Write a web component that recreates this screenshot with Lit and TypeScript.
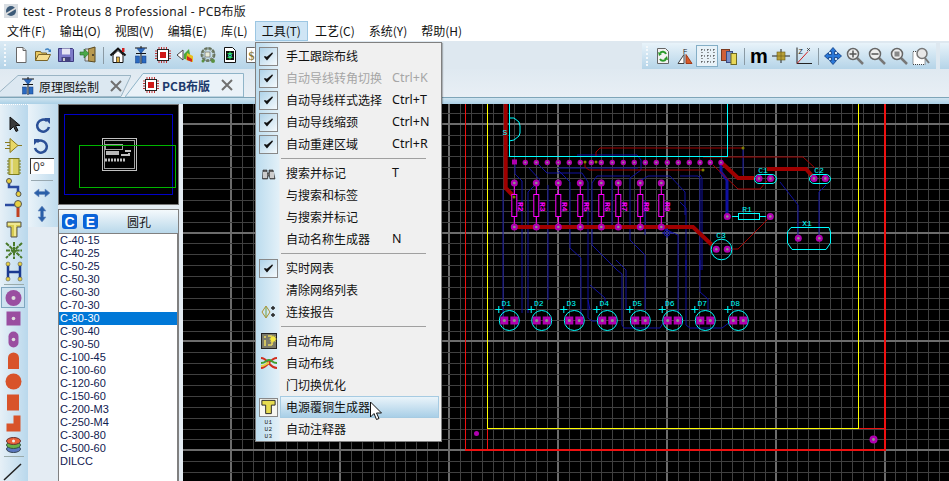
import { LitElement, html, css, svg } from "lit";
import { customElement } from "lit/decorators.js";

const icon = (body: unknown, w = 18, h = 18) =>
  html`<svg width=${w} height=${h} viewBox="0 0 ${w} ${h}">${body}</svg>`;

// main toolbar glyphs
const TOOL_ICONS: Record<string, unknown> = {
  newDoc: svg`<path d="M4.500 1.500h6.500l3 3v12h-9.500z" fill="#fff" stroke="#666"/><path d="M11 1.500v3h3" fill="#ddd" stroke="#666"/>`,
  open: svg`<path d="M1.500 14.500v-9h5l1 1.500h5v2" fill="#e8c860" stroke="#7a6428"/><path d="M1.500 14.500l3-6h12l-3 6z" fill="#f6df90" stroke="#7a6428"/><path d="M11 3c2-1.500 4-1 5 1l1-1v3h-3l1-1c-1-1.500-2.500-1.500-3.500-.5" fill="#3a7fc0"/>`,
  save: svg`<path d="M1.500 2.500h14l1 1v12h-15z" fill="#7d7bc9" stroke="#3d3b80"/><rect x="5" y="2.500" width="8" height="6" fill="#e6e6f4"/><rect x="4.500" y="11" width="9" height="4.500" fill="#45447f"/><rect x="6" y="12" width="2" height="3" fill="#ccc"/>`,
  exit: svg`<path d="M9 3l7-2v15l-7-1z" fill="#b89a50" stroke="#5a4a20"/><path d="M9 3h-3v12h3" fill="#ddd" stroke="#666"/><path d="M1 6h4v-3l5 4.500-5 4.500v-3h-4z" fill="#4aa84a" stroke="#2a6a2a" stroke-width=".6"/><circle cx="14" cy="9" r=".9" fill="#222"/>`,
  home: svg`<path d="M1.500 9.500l7.500-7 7.500 7" fill="none" stroke="#111" stroke-width="2"/><path d="M4 9v7.500h10v-7.500l-5-4.500z" fill="#fff" stroke="#111"/><rect x="7.500" y="11" width="3" height="5.500" fill="#e0b040" stroke="#111" stroke-width=".6"/><rect x="13" y="2" width="2.500" height="4" fill="#d02020"/>`,
  diode: svg`<path d="M9 0v18" stroke="#111"/><path d="M3 2h12M4 7.500h10" stroke="#111"/><path d="M5 2.500l8 0-4 5z" fill="#2a6ac0" stroke="#123a80" stroke-width=".5"/><rect x="3.500" y="10" width="4" height="7" fill="#2a6ac0" stroke="#123a80" stroke-width=".5"/><rect x="10" y="10" width="4" height="7" fill="#2a6ac0" stroke="#123a80" stroke-width=".5"/>`,
  chip: svg`<rect x="3.500" y="3.500" width="11" height="11" fill="#fff" stroke="#222"/><rect x="6" y="6" width="6" height="6" fill="#d01818"/><path d="M5 1v2M7.500 1v2M10 1v2M12.500 1v2M5 15v2M7.500 15v2M10 15v2M12.500 15v2M1 5h2M1 7.500h2M1 10h2M1 12.500h2M15 5h2M15 7.500h2M15 10h2M15 12.500h2" stroke="#c03030"/>`,
  view3d: svg`<path d="M1 9l6-5v10z" fill="#fff" stroke="#444"/><path d="M8 8l5-5 2 11-7-1z" fill="#4ca83c"/><path d="M11 7l6 3 0 6-7-2z" fill="#e8c020"/><path d="M11 10l5 3v3l-5-2z" fill="#d02a20"/>`,
  gear: svg`<circle cx="9" cy="8.500" r="6" fill="none" stroke="#7a8a70" stroke-width="3" stroke-dasharray="3 1"/><circle cx="9" cy="8.500" r="6.500" fill="none" stroke="#444" stroke-width=".5"/><rect x="6" y="6" width="5" height="5" fill="#e8ecd8" stroke="#555" stroke-width=".6"/><circle cx="14" cy="15" r="2" fill="#5a9040"/><circle cx="4" cy="15" r="1.500" fill="#5a9040"/>`,
  bom: svg`<path d="M3.500 1.500h8l3 3v12h-11z" fill="#fff" stroke="#111"/><rect x="5" y="5" width="8" height="9" fill="#111"/><path d="M9 5.500v8M6.500 7.500h5M6.500 11.500h5" stroke="#20e040"/><circle cx="9" cy="9.500" r="1.500" fill="none" stroke="#40e0e0"/>`,
  dollar: svg`<path d="M3.500 1.500h8l3 3v12h-11z" fill="#fff" stroke="#666"/><text x="5.500" y="13.500" font-family="Liberation Serif" font-size="12" font-weight="700" fill="#8a7a3a">$</text>`,
  refresh: svg`<path d="M3.500 1.500h8l3 3v12h-11z" fill="#f2f2f2" stroke="#666"/><path d="M12 7a3.500 3.500 0 0 0-6-1" fill="none" stroke="#2a9a2a" stroke-width="2"/><path d="M6 12a3.500 3.500 0 0 0 6 0" fill="none" stroke="#2a9a2a" stroke-width="2"/><path d="M4 5l4 2-3 2zM14 13l-4-1 3-3z" fill="#2a9a2a"/>`,
  flip: svg`<path d="M8 16.500v-9l-6 9z" fill="#fff" stroke="#444"/><path d="M10 16.500v-9l6 9z" fill="#d85a28" stroke="#a03a18"/><text x="7" y="6.500" font-family="Liberation Sans" font-size="7" fill="#222">F</text>`,
  dots: svg`<path d="M3 3h14M3 9h14M3 15h14" stroke="#333" stroke-dasharray="1 2"/><path d="M4 2v14M10 2v14M16 2v14" stroke="#333" stroke-dasharray="1 2"/>`,
  layers: svg`<rect x="1.500" y="2.500" width="8" height="11" fill="#d06038" stroke="#7a3a20"/><rect x="6.500" y="4.500" width="6" height="11" fill="#7a90c8" stroke="#3a4a80"/><rect x="11" y="6.500" width="5.500" height="11" fill="#e8d858" stroke="#706a20"/>`,
  origin: svg`<path d="M0 9h18M9 2v14" stroke="#222"/><rect x="5" y="5" width="8" height="8" fill="#b8a038" stroke="#6a5a18" stroke-width=".6"/><path d="M9 5v8M5 9h8" stroke="#6a5a18" stroke-width=".6"/>`,
  axes: svg`<path d="M3 .5v16h15" fill="none" stroke="#222"/><path d="M3 16.500l11-12" stroke="#d02020"/><text x="4.500" y="7" font-family="Liberation Sans" font-size="7" fill="#222">Z</text><path d="M13 1l3 3M16 1l-3 3" stroke="#222" stroke-width=".7"/>`,
  pan: svg`<path d="M9 .5l3.500 4h-2v3h3v-2l4 3.500-4 3.500v-2h-3v3h2l-3.500 4-3.500-4h2v-3h-3v2l-4-3.500 4-3.500v2h3v-3h-2z" fill="#2a78d8" stroke="#0c3a80" stroke-width=".8"/>`,
  zoomIn: svg`<path d="M11 11l6 6" stroke="#777" stroke-width="2.500"/><circle cx="7" cy="7" r="5.500" fill="#eee" stroke="#666" stroke-width="1.500"/><path d="M3.500 7h7M7 3.500v7" stroke="#555" stroke-width="1.500"/>`,
  zoomOut: svg`<path d="M11 11l6 6" stroke="#777" stroke-width="2.500"/><circle cx="7" cy="7" r="5.500" fill="#eee" stroke="#666" stroke-width="1.500"/><path d="M3.500 7h7" stroke="#555" stroke-width="1.500"/>`,
  zoomFit: svg`<path d="M11 11l6 6" stroke="#777" stroke-width="2.500"/><circle cx="7" cy="7" r="5.500" fill="#eee" stroke="#666" stroke-width="1.500"/><rect x="4.500" y="4.500" width="5" height="5" fill="#888"/>`,
  zoomArea: svg`<rect x="1" y="4.500" width="12" height="13" fill="#fff" stroke="#444" stroke-dasharray="1 1"/><path d="M13 11l4 5" stroke="#777" stroke-width="2"/><circle cx="10" cy="6.500" r="5" fill="#e8e8e8" stroke="#777" stroke-width="1.500"/>`,
};

const pad = (fill: string, shape: unknown) => icon(svg`<g fill=${fill}>${shape}</g>`, 22, 21);
const PURPLE = "#9a4ea0";
const RUST = "#d8532a";

// left mode column, top block then the pad block
const MODE_TOP = [
  icon(svg`<path d="M7 3v13l3.500-3.500 2.500 5 2-1-2.500-5h4.500z" fill="#3a3a3a" stroke="#111"/>`, 22, 21),
  icon(svg`<path d="M4 10.500h3M15 10.500h4" stroke="#8a7a20"/><path d="M7 3.500v14l8-7z" fill="#e8d868" stroke="#8a7a20"/><path d="M2 7.500h5M2 13.500h5" stroke="#8a7a20"/>`, 22, 21),
  icon(svg`<rect x="6" y="2.500" width="10" height="16" fill="#d8d060" stroke="#7a7a20"/><path d="M4 5h2M4 8h2M4 11h2M4 14h2M4 17h2M16 5h2M16 8h2M16 11h2M16 14h2M16 17h2" stroke="#7a7a20"/><path d="M9 3v15" stroke="#eee"/>`, 22, 21),
  icon(svg`<path d="M6 4v6h9v7" fill="none" stroke="#2a4aa0" stroke-width="2.500"/><circle cx="6" cy="4" r="2.500" fill="#e8d040" stroke="#555"/><circle cx="15.500" cy="17" r="2.500" fill="#e8d040" stroke="#555"/>`, 22, 21),
  icon(svg`<path d="M2 7h10" stroke="#2a4aa0" stroke-width="2.500"/><path d="M15 8v11" stroke="#c04020" stroke-width="3"/><circle cx="15" cy="6" r="3.500" fill="#e8d040" stroke="#555"/>`, 22, 21),
  icon(svg`<path d="M4 3h14v5h-4v10h-6v-10h-4z" fill="#d8cc50" stroke="#555"/><path d="M5 4h12v2h-4v11h-2v-11h-6z" fill="#f0e890"/>`, 22, 21),
  icon(svg`<path d="M3 3l16 15M19 3l-16 15M11 2v17M3 10.500h16" stroke="#4a7a2a" stroke-width="2" stroke-dasharray="4 .8"/>`, 22, 21),
  icon(svg`<path d="M5 4v13M17 4v13M5 11h12" stroke="#1a3a90" stroke-width="2.500"/><circle cx="5" cy="3" r="2" fill="#e8d040" stroke="#555" stroke-width=".6"/><circle cx="17" cy="3" r="2" fill="#e8d040" stroke="#555" stroke-width=".6"/><circle cx="5" cy="18" r="2" fill="#e8d040" stroke="#555" stroke-width=".6"/><circle cx="17" cy="18" r="2" fill="#e8d040" stroke="#555" stroke-width=".6"/>`, 22, 21),
];
const MODE_PADS = [
  pad(PURPLE, svg`<circle cx="12.500" cy="11" r="8"/><circle cx="12.500" cy="11" r="2" fill="#ddd"/>`),
  pad(PURPLE, svg`<rect x="5.500" y="3.500" width="14" height="14"/><circle cx="12.500" cy="10.500" r="1.800" fill="#ddd"/>`),
  pad(PURPLE, svg`<rect x="7.500" y="2.500" width="10" height="16" rx="5"/><circle cx="12.500" cy="10.500" r="1.800" fill="#ddd"/>`),
  pad(RUST, svg`<path d="M7 19v-11a5.500 5.500 0 0 1 11 0v11z"/>`),
  pad(RUST, svg`<circle cx="12.500" cy="10.500" r="8"/>`),
  pad(RUST, svg`<rect x="6" y="2.500" width="12" height="16"/>`),
  pad(RUST, svg`<path d="M5.500 18.500v-8h7v-8h7v16z"/>`),
  icon(svg`<ellipse cx="12.500" cy="15" rx="7" ry="3.500" fill="#5a78c0" stroke="#345"/><ellipse cx="12.500" cy="11" rx="7" ry="3.500" fill="#68b048" stroke="#354"/><ellipse cx="12.500" cy="7" rx="7" ry="3.500" fill="#e86038" stroke="#633"/><circle cx="12.500" cy="7" r="1.500" fill="#eee"/>`, 22, 21),
];

const LIST = ["C-40-15", "C-40-25", "C-50-25", "C-50-30", "C-60-30", "C-70-30", "C-80-30", "C-90-40", "C-90-50", "C-100-45", "C-100-60", "C-120-60", "C-150-60", "C-200-M3", "C-250-M4", "C-300-80", "C-500-60", "DILCC"];
const MENUS = ["文件(F)", "输出(O)", "视图(V)", "编辑(E)", "库(L)", "工具(T)", "工艺(C)", "系统(Y)", "帮助(H)"];

type MenuRow = { label?: string; key?: string; check?: boolean; off?: boolean; hot?: boolean; art?: unknown };

const CHECK = icon(svg`<path d="M4.500 8.500l2.500 3 5.500-6.500-5.500 4.500z" fill="#111" stroke="#111" stroke-width="1.200"/>`, 17, 17);

const MENU_ROWS: MenuRow[] = [
  { label: "手工跟踪布线", check: true },
  { label: "自动导线转角切换", key: "Ctrl+K", check: true, off: true },
  { label: "自动导线样式选择", key: "Ctrl+T", check: true },
  { label: "自动导线缩颈", key: "Ctrl+N", check: true },
  { label: "自动重建区域", key: "Ctrl+R", check: true },
  {},
  { label: "搜索并标记", key: "T", art: icon(svg`<path d="M3 6h4v3h2v-3h4l2 9h-5l-.5-3h-1.500l-.5 3h-5z" fill="#666" stroke="#222" stroke-width=".6"/><rect x="3" y="8" width="4" height="6" fill="#ccc"/><rect x="10" y="8" width="4" height="6" fill="#ccc"/>`) },
  { label: "与搜索和标签" },
  { label: "与搜索并标记" },
  { label: "自动名称生成器", key: "N" },
  {},
  { label: "实时网表", check: true },
  { label: "清除网络列表" },
  { label: "连接报告", art: icon(svg`<path d="M6 3l-4 6 4 6 4-6z" fill="none" stroke="#b09030"/><path d="M6 4v10" stroke="#70a040"/><path d="M13 3v4M11 5h4M13 10v4M11 12h4" stroke="#222" stroke-width="1.400"/>`) },
  {},
  { label: "自动布局", art: icon(svg`<rect x="1.500" y="1.500" width="15" height="15" fill="#7a7a6a" stroke="#222"/><path d="M5 4v2M5 8v6M8 4h4M8 13h4M12 9v4" stroke="#e8d860" stroke-width="1.600"/><path d="M13 3l1 2 2-1-1 2 2 1-2 1 1 2-2-1-1 2-1-2-2 1 1-2-2-1 2-1-1-2 2 1z" fill="#f4e840"/>`) },
  { label: "自动布线", art: icon(svg`<path d="M1 4c7 0 8 10 16 10M1 14c7 0 8-10 16-10" fill="none" stroke="#d03020" stroke-width="2"/><path d="M1 9c5 0 5-3 8-3s3 3 8 3" fill="none" stroke="#40a030" stroke-width="2"/><path d="M1 12c5 0 5-3 8-3" fill="none" stroke="#e8d040" stroke-width="2"/>`) },
  { label: "门切换优化" },
  { label: "电源覆铜生成器", hot: true, art: icon(svg`<path d="M2 2h14v5h-4v9h-6v-9h-4z" fill="#e6dc50" stroke="#222"/>`) },
  { label: "自动注释器", art: html`<span class="annot">U1<br />U2<br />U3</span>` },
];

// canvas grid, in page pixels: majors fall every 108.9 with ten cells to one
const GRID_X = Array.from({ length: 71 }, (_, i) => 231.2 + i * 10.89);
const GRID_Y = Array.from({ length: 36 }, (_, i) => 101.9 + i * 10.89);

const TOP_PADS = [514.3, 525.3, 536.3, 547.3, 558.3, 569.3, 580.3, 591.3, 601.3, 612.3, 623.3, 634.3, 645.3, 656.3, 667.3, 678.3, 689.3, 700, 710.3, 721];
const RES_X = [514.3, 536.3, 558.3, 580.3, 601.3, 618.3, 640.3, 661.3];
const RES_LABEL = ["R2", "R3", "R4", "R5", "R6", "R7", "R8", "R9"];
const LED_X = [509.3, 541.7, 574.3, 607.3, 640.3, 672.7, 705.3, 738.3];

const BLUE_TRACKS = [
  "515,165 515,174 522,181 522,270 522,313",
  "503,190 503,320",
  "529,168 540,180 528,192 528,290 528,313",
  "537,163 547,173 582,173 588,182 588,300 590,310",
  "548,185 548,300",
  "558,170 570,182 570,248 581,258 581,320",
  "577,155 637,155 641,160 641,170 630,178 630,240 645,255 645,310",
  "558,168 638,168",
  "592,183 597,176 630,176",
  "592,183 592,245 617,270 622,274 622,325 624,328 660,328 663,323",
  "590,285 605,298 605,302",
  "588,300 588,318 592,321 597,321",
  "612,180 612,227",
  "640,181 648,176 670,176 685,192 685,215",
  "662,228 678,235 678,312",
  "686,260 686,325 690,328 722,328 730,322",
  "700,260 700,292 708,299 708,310",
  "616,260 626,270 626,310",
  "645,200 645,235",
  "743,148 743,175",
  "680,176 698,176 700,178 700,270",
  "700,175 702,178 702,270",
  "780,182 798,205 798,238",
  "819,238 819,192 826,185",
  "680,202 686,208 686,270",
];

const RED_THIN = [
  "596,156 596,152 600,148 743,148",
  "585,162 585,167 589,170 703,170",
  "703,157 803,157 815,168",
  "713,165 738,189 760,189 767,181",
  "733,249 738,249 770,217",
];
const RED_WIDE = [
  "505.700,104 505.700,188 514.300,197",
  "514,227 693,227 712,245",
  "722,163 738,178 755,178",
  "767,169 806,169 814,178",
];

@customElement("app-root")
export class AppRoot extends LitElement {
  static styles = css`
    :host {
      display: block;
      position: relative;
      width: 949px;
      height: 481px;
      overflow: hidden;
      background: #e4ecf3;
      font-family: "Noto Sans CJK SC", "Noto Sans", sans-serif;
      font-size: 12px;
      color: #111;
    }
    svg {
      display: block;
    }
    .title {
      display: flex;
      align-items: center;
      gap: 4px;
      height: 21px;
      padding-left: 3px;
      background: #fff;
      font-family: "Noto Sans", "Noto Sans CJK SC", sans-serif;
      font-size: 12px;
      letter-spacing: 0.25px;
      color: #222;
    }
    .menubar {
      display: flex;
      height: 20px;
      background: #fff;
    }
    .menubar span {
      display: flex;
      align-items: center;
      padding: 0 7px;
      line-height: 20px;
    }
    .menubar .open {
      background: #cfe5f5;
      outline: 1px solid #9cc6e2;
      outline-offset: -1px;
    }
    .toolrow {
      display: flex;
      height: 28px;
      background: #dee8f0;
    }
    .bar {
      display: flex;
      align-items: center;
      height: 26px;
      margin-top: 2px;
      background: linear-gradient(#e8f3fa, #b5d4e8);
    }
    .bar.left {
      width: 300px;
      padding-left: 4px;
      background: linear-gradient(#dcebf5, #b5d4e8);
      margin-top: 0;
      height: 28px;
    }
    .bar.right {
      margin-left: auto;
      width: 294px;
      padding-left: 4px;
      box-sizing: border-box;
    }
    .bar.stub {
      width: 9px;
      margin-left: 4px;
    }
    .grip {
      flex: none;
      align-self: stretch;
      width: 0;
      margin: 3px 4px 3px 0;
      border-left: 2px dotted #f4f8fb;
    }
    .btn {
      display: flex;
      align-items: center;
      justify-content: center;
      flex: none;
      width: 22px;
      height: 22px;
      box-sizing: border-box;
    }
    .bar.left .btn {
      width: 22.3px;
    }
    .btn.on {
      border: 1px solid #84aec6;
      background: #e8f2f8;
    }
    .btn .m {
      font: 700 20px/22px "Liberation Sans", sans-serif;
      color: #000;
    }
    .tsep {
      flex: none;
      width: 1px;
      height: 17px;
      margin: 0 3px 0 4px;
      background: #8a9aa4;
    }
    .tabs {
      display: flex;
      height: 28px;
      align-items: flex-end;
      background: linear-gradient(#dfe9f1, #e8eff5);
    }
    .tab {
      position: relative;
      display: flex;
      align-items: center;
      box-sizing: border-box;
      height: 22px;
      width: 131px;
      padding-left: 19px;
      gap: 2px;
    }
    .tab.active {
      height: 24px;
      width: 120px;
      margin-left: -6px;
      padding-left: 17px;
      font-weight: 700;
      color: #1d3a6c;
    }
    .tab > .shape {
      position: absolute;
      inset: 0;
      z-index: 0;
    }
    .tab > :not(.shape) {
      position: relative;
    }
    .tab .x {
      margin-left: 8px;
    }
    .band {
      height: 7px;
      box-sizing: border-box;
      border-top: 1px solid #7ea5b8;
      background: linear-gradient(#cfe4f0, #abd0e6);
    }
    .main {
      display: flex;
      height: 377px;
    }
    .col1 {
      display: flex;
      flex-direction: column;
      width: 28px;
      box-sizing: border-box;
      padding-top: 9px;
      border-top: 1px dotted #fff;
      background: linear-gradient(90deg, #e6f0f7, #b9d8ec);
    }
    .col1 .sep {
      flex: none;
      height: 1px;
      margin: 2px 4px 2px 4px;
      background: #9aa;
    }
    .col1 .sep.low {
      margin: 1px 4px 3px;
    }
    .mode {
      flex: none;
      height: 21px;
      margin-left: 1px;
      box-sizing: border-box;
    }
    .mode.up {
      margin-left: 3px;
    }
    .mode.on {
      background: #cfe2f0;
      outline: 1px solid #7fa6bf;
      outline-offset: -1px;
      width: 24px;
    }
    .col2 {
      width: 30px;
      height: 123px;
      box-sizing: border-box;
      padding: 10px 2px 0 0;
      display: flex;
      flex-direction: column;
      align-items: center;
      background: linear-gradient(90deg, #eaf3f9, #c0dcee);
    }
    .col2 input {
      box-sizing: border-box;
      flex: none;
      width: 24px;
      height: 16px;
      margin: 2px 0 6px;
      padding: 0 0 0 2px;
      border: none;
      border-left: 1px solid #333;
      border-top: 1px solid #333;
      background: #fff;
      font: 12px "Noto Sans", sans-serif;
      color: #444;
    }
    .col2 .sep {
      width: 22px;
      height: 1px;
      background: #98a8b0;
      margin-bottom: 1px;
    }
    .cell {
      height: 21px;
      display: flex;
      align-items: center;
    }
    .mid {
      display: flex;
      flex-direction: column;
      width: 121px;
      margin-right: 4px;
    }
    .preview {
      height: 101px;
      flex: none;
      background: #000;
      box-sizing: border-box;
      border: 1px solid #777;
    }
    .phead {
      display: flex;
      align-items: center;
      gap: 6px;
      flex: none;
      height: 24px;
      margin-top: 4px;
      padding-left: 3px;
      box-sizing: border-box;
      border: 1px solid #808080;
      border-bottom: none;
      background: linear-gradient(#f4f9fc, #b9d8ea);
    }
    .chipbtn {
      display: flex;
      align-items: center;
      justify-content: center;
      width: 15px;
      height: 15px;
      border-radius: 3px;
      background: #0a63d8;
      color: #fff;
      font: 700 14px "Liberation Sans", sans-serif;
    }
    .phead .name {
      flex: 1;
      text-align: center;
      padding-right: 4px;
    }
    .list {
      flex: 1;
      background: #fff;
      box-sizing: border-box;
      border-left: 1px solid #808080;
      border-right: 2px solid #808080;
      border-top: 1px solid #808080;
      font-family: "Liberation Sans", sans-serif;
      font-size: 11px;
    }
    .list div {
      height: 13px;
      line-height: 13px;
      padding-left: 1px;
      color: #102050;
    }
    .list div.sel {
      background: #0078d7;
      color: #fff;
    }
    .canvas {
      flex: 1;
      background: #000;
      min-width: 0;
    }
    .menu {
      position: absolute;
      left: 255px;
      top: 42px;
      width: 187px;
      height: 400px;
      box-sizing: border-box;
      padding: 2px 2px 2px 1px;
      border: 1px solid #808080;
      background: linear-gradient(90deg, #bcdcee 0, #e2f0f8 23px, #f0f0f0 24px);
      box-shadow: 1px 1px 1px rgba(0, 0, 0, 0.25);
    }
    .row {
      position: relative;
      display: flex;
      align-items: center;
      height: 22px;
      box-sizing: border-box;
    }
    .row .gut {
      display: flex;
      align-items: center;
      justify-content: center;
      width: 23px;
      flex: none;
      margin-right: 6px;
    }
    .row .label {
      width: 106px;
      flex: none;
      margin-top: -2px;
      white-space: nowrap;
    }
    .row .key {
      margin-top: -2px;
      font-family: "Noto Sans", sans-serif;
      font-size: 12.5px;
    }
    .row.off {
      color: #a6a6a6;
    }
    .hotbg {
      position: absolute;
      left: 24px;
      top: 353px;
      width: 159px;
      height: 22px;
      box-sizing: border-box;
      border: 1px solid #a6cbe2;
      background: linear-gradient(#eaf4fa, #a9cfe7);
    }
    .checkbox {
      display: flex;
      width: 19px;
      height: 19px;
      align-items: center;
      justify-content: center;
      box-sizing: border-box;
      border: 1px solid #888;
      background: linear-gradient(135deg, #aed2e8, #f4fafd);
    }
    .checkbox.white {
      background: #f7f7f0;
    }
    .msep {
      height: 7px;
      display: flex;
      align-items: center;
      padding-left: 24px;
      box-sizing: border-box;
      padding-right: 13px;
    }
    .msep::after {
      content: "";
      flex: 1;
      height: 1px;
      background: #a0a0a0;
    }
    .annot {
      font: 6px/7px "Liberation Mono", monospace;
      color: #222;
      letter-spacing: 0.5px;
    }
    .cursor {
      position: absolute;
      left: 369px;
      top: 401px;
    }
  `;

  private toolbar(names: (string | null)[], active?: string) {
    return names.map((n) => {
      if (n === null) return html`<span class="tsep"></span>`;
      if (n === "metric") return html`<span class="btn"><span class="m">m</span></span>`;
      return html`<span class="btn ${n === active ? "on" : ""}">${icon(TOOL_ICONS[n])}</span>`;
    });
  }

  private renderBoard() {
    const pin = (x: number, y: number, r: number) => svg`
      <circle cx=${x} cy=${y} r=${r} fill="#b000b0" />
      <circle cx=${x} cy=${y} r=${r * 0.36} fill="#8a9a8a" />`;
    const label = (x: number, y: number, t: string, c = "#00ffff") =>
      svg`<text x=${x} y=${y} font-family="Liberation Mono" font-size="8" fill=${c} text-anchor="middle">${t}</text>`;
    const poly = (p: string, stroke: string, w: number) =>
      svg`<polyline points=${p} fill="none" stroke=${stroke} stroke-width=${w} />`;
    return html`<svg class="canvas" width="766" height="377" viewBox="183 104 766 377">
      <g shape-rendering="crispEdges">
        ${GRID_X.map((x, i) => {
          const major = i % 10 === 0;
          return svg`<line x1=${Math.round(x)} x2=${Math.round(x)} y1="104" y2="481" stroke=${major ? "#6c6c6c" : "#404040"} stroke-width=${major ? 2 : 1} />`;
        })}
        ${GRID_Y.map((y, i) => {
          const major = (i - 2) % 10 === 0;
          return svg`<line y1=${Math.round(y)} y2=${Math.round(y)} x1="183" x2="949" stroke=${major ? "#6c6c6c" : "#404040"} stroke-width=${major ? 2 : 1} />`;
        })}
      </g>
      ${BLUE_TRACKS.map((p) => poly(p, "#1010a0", 1))}
      ${poly("721,163 721,172 727,180 727,216", "#1010a0", 3)}
      ${RED_THIN.map((p) => poly(p, "#a00000", 1))}
      ${RED_WIDE.map((p) => poly(p, "#a00000", 4))}

      <g shape-rendering="crispEdges">
        <line x1="465.500" x2="465.500" y1="104" y2="450" stroke="#ee1111" />
        <polyline points="465,450 884.500,450 884.500,104" fill="none" stroke="#ee1111" stroke-width="2" />
        <polyline points="487.500,104 487.500,428.500 858.500,428.500 858.500,104" fill="none" stroke="#ffff00" />
        <line x1="858.500" x2="884" y1="428.500" y2="428.500" stroke="#ee1111" />
        <line x1="487.500" x2="487.500" y1="429" y2="450" stroke="#ee1111" />
        <polyline points="509.500,104 509.500,156.500 727.500,156.500 727.500,104" fill="none" stroke="#00ffff" />
      </g>
      ${poly("509,118 514,118 519,122 520,126 520,133 519,136 514,140 509,141", "#00ffff", 1)}
      ${label(505, 135, "S")}

      ${RES_X.map(
        (x, i) => svg`
          <line x1=${x} x2=${x} y1="183" y2="227" stroke="#ff00ff" />
          <rect x=${x - 2.5} y="194.500" width="5" height="22" fill="#000" stroke="#ff00ff" />
          <text transform="translate(${x + 3.5} 202) rotate(90)" font-family="Liberation Mono" font-size="8" font-weight="700" fill="#ff00ff">${RES_LABEL[i]}</text>
          ${pin(x, 183, 3.5)}
          ${pin(x, 227, 3.5)}`,
      )}
      <rect x="512" y="159.500" width="5" height="5" fill="#b000b0" />
      ${TOP_PADS.slice(1).map((x) => pin(x, 162.5, 2.7))}
      ${[[585, 162], [596, 162], [514, 197], [743, 148], [703, 170]].map(
        ([x, y]) => svg`<circle cx=${x} cy=${y} r="1.500" fill="#808000" />`,
      )}

      <circle cx="667" cy="233" r="3" fill="none" stroke="#1010a0" />
      <path d="M662 233h11M667 228v10" stroke="#1010a0" />

      <rect x="754.500" y="174.500" width="22" height="9" rx="4.500" fill="none" stroke="#00ffff" />
      ${pin(759, 178.5, 3.5)}${pin(770.5, 178.5, 3.5)}${label(763, 173, "C1")}
      <rect x="809.500" y="174.500" width="21" height="9" rx="4.500" fill="none" stroke="#00ffff" />
      ${pin(814, 178.5, 3.5)}${pin(825.3, 178.5, 3.5)}${label(819, 173, "C2")}

      <path d="M732 216.500h6M760 216.500h6" stroke="#00ffff" />
      <rect x="738.500" y="213.500" width="21" height="6" fill="none" stroke="#00ffff" />
      ${pin(727.3, 216.5, 3.5)}${pin(770.3, 216.5, 3.5)}${label(747, 212, "R1")}

      <polygon points="791,227.500 829,227.500 830.500,232 830.500,243 826,249.500 792,249.500 787.500,243 787.500,232" fill="none" stroke="#00ffff" />
      ${pin(798.3, 238.3, 3.5)}${pin(819.3, 238.3, 3.5)}${label(807, 226, "X1")}

      <circle cx="721.500" cy="249.500" r="10.300" fill="none" stroke="#00ffff" />
      ${pin(716.3, 249.3, 3.5)}${pin(727.3, 249.3, 3.5)}${label(721, 238, "C3")}

      ${LED_X.map(
        (x, i) => svg`
          <circle cx=${x} cy="320.500" r="10" fill="none" stroke="#00ffff" />
          <rect x=${x - 9} y="316.500" width="8" height="8" fill="#b000b0" />
          <rect x=${x + 1} y="316.500" width="8" height="8" fill="#b000b0" />
          <circle cx=${x - 5} cy="320.500" r="1.500" fill="#8a9a8a" />
          <circle cx=${x + 5} cy="320.500" r="1.500" fill="#8a9a8a" />
          <path d="M${x - 14} 309.500h7M${x - 10.5} 306v7" stroke="#00ffff" />
          ${label(x - 3, 306, `D${i + 1}`)}`,
      )}
      <circle cx="476.500" cy="433.500" r="2.500" fill="#b000b0" />
      ${pin(873.5, 439.5, 4)}
    </svg>`;
  }

  protected render() {
    return html`
      <div class="title">
        ${icon(svg`<rect x="1" y="1" width="14" height="14" fill="#d8dde2"/><circle cx="8" cy="8" r="5" fill="#3c5a78"/><path d="M3 11l10-6" stroke="#ddd" stroke-width="1.500"/>`, 16, 16)}
        <span>test - Proteus 8 Professional - PCB布版</span>
      </div>
      <div class="menubar">
        ${MENUS.map((m, i) => html`<span class=${i === 5 ? "open" : ""}>${m}</span>`)}
      </div>
      <div class="toolrow">
        <div class="bar left">
          <span class="grip"></span>
          ${this.toolbar(["newDoc", "open", "save", "exit", null, "home", "diode", "chip", "view3d", "gear", "bom", "dollar"])}
        </div>
        <div class="bar right">
          <span class="grip"></span>
          ${this.toolbar(["refresh", "flip", "dots", "layers", null, "metric", "origin", "axes", null, "pan", "zoomIn", "zoomOut", "zoomFit", "zoomArea"], "dots")}
        </div>
        <div class="bar stub"></div>
      </div>
      <div class="tabs">
        <div class="tab">
          <svg class="shape" width="131" height="22" viewBox="0 0 131 22"><path d="M-6 22L18 .5H131L121 21.500z" fill="#dce8f1" stroke="#9ab4c4" /></svg>
          ${icon(TOOL_ICONS.diode, 18, 18)}<span>原理图绘制</span>
          <span class="x">${icon(svg`<path d="M2 2l10 10M12 2l-10 10" stroke="#707070" stroke-width="2"/>`, 14, 14)}</span>
        </div>
        <div class="tab active">
          <svg class="shape" width="120" height="24" viewBox="0 0 120 24"><path d="M0 24L18 .5H118.500V24z" fill="#eaf2f8" stroke="#8fb4c8" /></svg>
          ${icon(TOOL_ICONS.chip, 18, 18)}<span>PCB布版</span>
          <span class="x">${icon(svg`<path d="M2 2l10 10M12 2l-10 10" stroke="#707070" stroke-width="2"/>`, 14, 14)}</span>
        </div>
      </div>
      <div class="band"></div>
      <div class="main">
        <div class="col1">
          ${MODE_TOP.map((m) => html`<div class="mode up">${m}</div>`)}
          <div class="sep"></div>
          ${MODE_PADS.map((m, i) => html`<div class="mode ${i === 0 ? "on" : ""}">${m}</div>`)}
          <div class="sep low"></div>
          <div class="mode">${icon(svg`<path d="M3 20L20 4" stroke="#222" stroke-width="1.500"/>`, 22, 21)}</div>
        </div>
        <div class="col2">
          <div class="cell">${icon(svg`<path d="M14 5a6 6 0 1 0 2 6" fill="none" stroke="#2a4f96" stroke-width="2.500"/><path d="M11 2h6v6z" fill="#2a4f96"/>`)}</div>
          <div class="cell">${icon(svg`<path d="M4 5a6 6 0 1 1-2 6" fill="none" stroke="#2a4f96" stroke-width="2.500"/><path d="M7 2h-6v6z" fill="#2a4f96"/>`)}</div>
          <input .value=${"0°"} />
          <div class="sep"></div>
          <div class="cell">${icon(svg`<path d="M1 9l5-4v2.500h6v-2.500l5 4-5 4v-2.500h-6v2.500z" fill="#2a5fa8" stroke="#6f8fc0" stroke-width=".6"/>`)}</div>
          <div class="cell">${icon(svg`<path d="M9 1l4 5h-2.500v6h2.500l-4 5-4-5h2.500v-6h-2.500z" fill="#2a5fa8" stroke="#6f8fc0" stroke-width=".6"/>`)}</div>
        </div>
        <div class="mid">
          <div class="preview">
            <svg width="119" height="99" viewBox="59 105 119 99">
              <rect x="64.500" y="114.500" width="108" height="80" fill="none" stroke="#0000c8" />
              <rect x="102.500" y="138.500" width="34" height="32" fill="none" stroke="#c0c0c0" />
              <rect x="104.500" y="140.500" width="30" height="28" fill="none" stroke="#a0a0a0" />
              <rect x="105.500" y="144.500" width="17" height="5" fill="none" stroke="#a0a0a0" />
              <rect x="106" y="151" width="13" height="4" fill="#b8b8b8" />
              <path d="M121 155h8v-2M125 151h6" stroke="#c0c0c0" stroke-width="2" />
              <path d="M105 160h20" stroke="#c0c0c0" stroke-width="3" stroke-dasharray="2 1" />
              <rect x="79.500" y="145.500" width="96" height="42" fill="none" stroke="#00b400" />
            </svg>
          </div>
          <div class="phead">
            <span class="chipbtn">C</span><span class="chipbtn">E</span>
            <span class="name">圆孔</span>
          </div>
          <div class="list">
            ${LIST.map((l) => html`<div class=${l === "C-80-30" ? "sel" : ""}>${l}</div>`)}
          </div>
        </div>
        ${this.renderBoard()}
      </div>
      <div class="menu">
        <div class="hotbg"></div>
        ${MENU_ROWS.map((r) =>
          r.label === undefined
            ? html`<div class="msep"></div>`
            : html`<div class="row ${r.off ? "off" : ""}">
                <span class="gut">
                  ${r.check
                    ? html`<span class="checkbox">${CHECK}</span>`
                    : r.hot
                      ? html`<span class="checkbox white">${r.art}</span>`
                      : r.art ?? ""}
                </span>
                <span class="label">${r.label}</span>
                <span class="key">${r.key ?? ""}</span>
              </div>`,
        )}
      </div>
      <svg class="cursor" width="16" height="21" viewBox="0 0 16 21">
        <path d="M1.500 1v15l3.500-3.500 2.500 6 2.500-1-2.500-5.500h5z" fill="#fff" stroke="#111" />
      </svg>
    `;
  }
}

declare global {
  interface HTMLElementTagNameMap {
    "app-root": AppRoot;
  }
}
